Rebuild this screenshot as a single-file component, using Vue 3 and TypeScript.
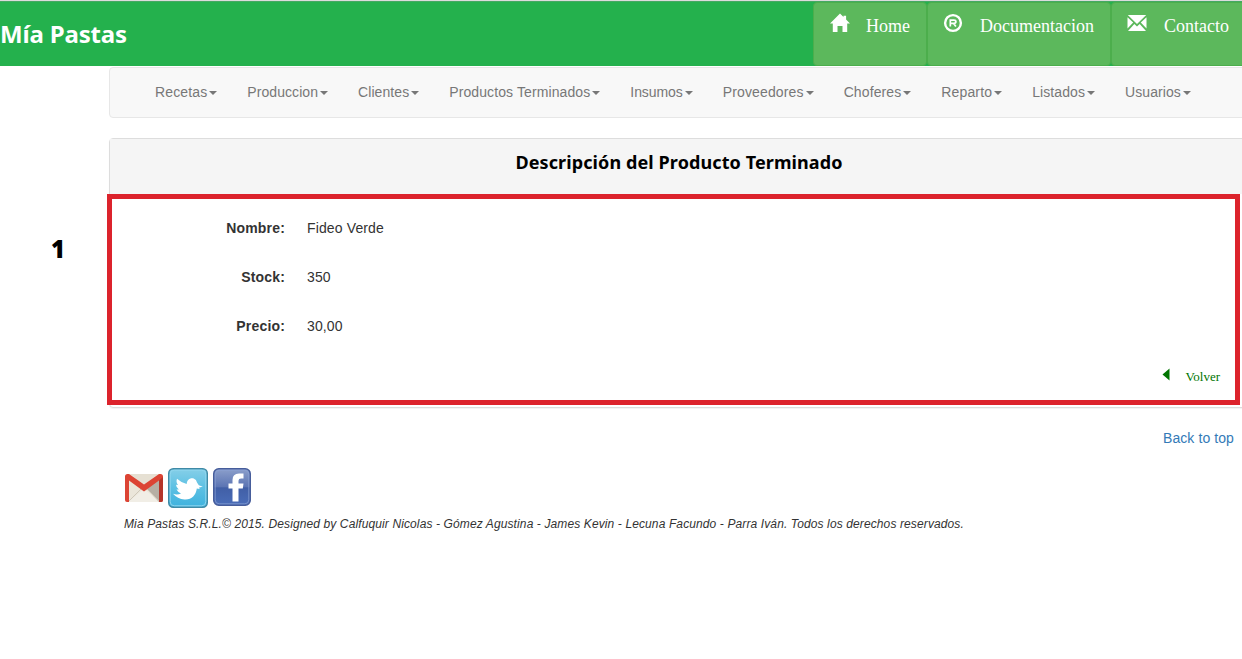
<script setup lang="ts">
interface Menu { text: string; tracking: number }
interface Field { label: string; value: string }

const menus: Menu[] = [
  { text: 'Recetas', tracking: 0.13 },
  { text: 'Produccion', tracking: 0.07 },
  { text: 'Clientes', tracking: 0.08 },
  { text: 'Productos Terminados', tracking: 0.1 },
  { text: 'Insumos', tracking: -0.07 },
  { text: 'Proveedores', tracking: 0.14 },
  { text: 'Choferes', tracking: 0.1 },
  { text: 'Reparto', tracking: 0.15 },
  { text: 'Listados', tracking: 0.1 },
  { text: 'Usuarios', tracking: 0.06 },
]
const fields: Field[] = [
  { label: 'Nombre:', value: 'Fideo Verde' },
  { label: 'Stock:', value: '350' },
  { label: 'Precio:', value: '30,00' },
]
</script>

<template>
  <div class="page">
    <header class="header">
      <div class="brand">Mía Pastas</div>
      <div class="actions">
        <a class="action home">
          <svg width="20" height="20" viewBox="0 0 20 20"><path fill="#fff" d="M10 .5 13.500 4V2.800h2.600v3.800L20 10.600h-2.800V19h-4.700v-6h-5v6H2.800v-8.400H0z" /></svg>
          <span>Home</span>
        </a>
        <a class="action docs">
          <svg width="20" height="20" viewBox="0 0 20 20"><circle cx="10" cy="10" r="7.900" fill="none" stroke="#fff" stroke-width="2.400" /><path d="M7.300 13.500V7.200h3.600q2 0 2 1.600t-2 1.600H7.300M10.600 10.400 12.900 13.500" fill="none" stroke="#fff" stroke-width="1.700" /></svg>
          <span>Documentacion</span>
        </a>
        <a class="action contact">
          <svg width="20" height="20" viewBox="0 0 20 20"><path fill="#fff" d="M.8 2h18.400L10 11zM.5 4.200 6.200 9.600.5 15.400zM19.500 4.200v11.200l-5.700-5.800zM7.300 10.900l2.700 2.500 2.700-2.500 6.300 7.100H1z" /></svg>
          <span>Contacto</span>
        </a>
      </div>
    </header>

    <div class="body">
      <aside class="marker">1</aside>
      <main class="content">
        <nav class="nav">
          <a v-for="m in menus" :key="m.text" class="menu" :style="{ letterSpacing: m.tracking + 'px' }">{{ m.text }}<i class="caret"></i></a>
        </nav>

        <section class="panel">
          <h3 class="title"><span>Descripción del Producto Terminado</span></h3>
          <div class="details">
            <dl class="fields">
              <div v-for="f in fields" :key="f.label" class="field">
                <dt>{{ f.label }}</dt>
                <dd>{{ f.value }}</dd>
              </div>
            </dl>
            <a class="back">
              <svg width="8" height="13" viewBox="0 0 8 13"><path fill="#007500" d="M7.500.5v12L.5 6.500z" /></svg>
              <span>Volver</span>
            </a>
          </div>
        </section>

        <div class="top-row"><a class="top">Back to top</a></div>

        <footer class="footer">
          <div class="social">
            <svg class="gmail" width="40" height="40" viewBox="0 0 40 40">
              <path fill="#ebe6da" d="M3 6h34v28H3z" />
              <path fill="#f1eee6" d="M4 34 20 21l16 13z" />
              <path fill="#e6e0d3" d="M6 6h28L20 17z" />
              <path fill="#a9a196" d="m23 21 12-10v23z" opacity=".8" />
              <path d="m5 33 12-12M35 33 23 21" stroke="#cfc8b9" fill="none" />
              <path fill="#dc4434" d="M1 8.500Q1 6 3.500 6H5l15 10.500L35 6h1.500Q39 6 39 8.500V32q0 2-2 2h-2V12.500L20 23.500 5 12.500V34H3q-2 0-2-2z" />
              <path fill="#b5352a" d="M35 12.500 39 9v23q0 2-2 2h-2z" />
            </svg>
            <svg class="twitter" width="40" height="40" viewBox="0 0 40 40">
              <defs><linearGradient id="tw" x2="0" y2="1"><stop stop-color="#86cfe8" /><stop offset=".5" stop-color="#5cc0e3" /><stop offset="1" stop-color="#3eb2de" /></linearGradient></defs>
              <rect x=".75" y=".75" width="38.500" height="38.500" rx="4.500" fill="url(#tw)" stroke="#3f8aa6" stroke-width="1.500" />
              <rect x="2.200" y="2.200" width="35.600" height="35.600" rx="4" fill="none" stroke="#8fd6ee" />
              <path fill="#fff" d="M9 10.800q3.500 3.400 9.700 5.200c.3-4.500 3.800-6.700 7-5.500q2.800 1 3.300 4l1.800 2.700 4 1.600-3.800.6.7 1.500-2.900-.3C28 27.500 23.500 32 16.500 31.500Q9.500 31 5 25.800q4.500 1.500 8-.4-3-.8-4.500-3.800l2.300-.2Q8.200 19.600 8 16.700l2 .4q-2.300-2.800-1-6.300z" />
            </svg>
            <svg class="facebook" width="38" height="38" viewBox="0 0 38 38">
              <defs><linearGradient id="fb" x2="0" y2="1"><stop stop-color="#8c9fcb" /><stop offset=".5" stop-color="#5b74b3" /><stop offset=".52" stop-color="#415fa6" /><stop offset="1" stop-color="#4a6db8" /></linearGradient></defs>
              <rect x=".75" y=".75" width="36.500" height="36.500" rx="5" fill="url(#fb)" stroke="#465d9b" stroke-width="1.500" />
              <rect x="2.200" y="2.200" width="33.600" height="33.600" rx="4" fill="none" stroke="#8ba3d4" opacity=".7" />
              <path fill="#fff" d="M19.500 33.500V20.500H15.500v-5h4V12Q19.500 5.500 26 5.500h4.500v5H28q-2.500 0-2.500 2.300v2.700h5l-.7 5h-4.300v13z" />
            </svg>
          </div>
          <p class="legal">Mia Pastas S.R.L.© 2015. Designed by Calfuquir Nicolas - Gómez Agustina - James Kevin - Lecuna Facundo - Parra Iván. Todos los derechos reservados.</p>
        </footer>
      </main>
    </div>
  </div>
</template>

<style>
body { margin: 0; background: #fff; overflow: hidden; }
</style>

<style scoped>
.page { box-sizing: border-box; width: 1242px; height: 659px; overflow: hidden; border-top: 1px solid #dcdcdc; font: 14px/20px "Liberation Sans", Arial, sans-serif; color: #333; }
.header { display: flex; justify-content: space-between; height: 64px; border-top: 1px solid #45a863; background: #24b14d; }
.brand { font: bold 24px/63px "Noto Sans", sans-serif; color: #fff; letter-spacing: -0.17px; white-space: nowrap; }
.actions { display: flex; width: 429px; }
.action { box-sizing: border-box; flex: none; display: flex; height: 64px; border: 1px solid #4cae4c; border-radius: 4px; background: #5cb85c; color: #fff; font: 18px/24px "Liberation Serif", serif; padding: 10px 0 0 16px; }
.action svg { flex: none; margin-right: 16px; }
.action span { padding-top: 1px; white-space: nowrap; }
.home { width: 114px; }
.docs { width: 184px; padding-left: 15px; }
.docs svg { margin-right: 17px; }
.contact { width: 140px; padding-left: 15px; }
.contact svg { margin-right: 17px; }
.body { display: flex; }
.marker { width: 109px; flex: none; box-sizing: border-box; padding: 170px 0 0 51px; font: 900 24px/26px "Open Sans", sans-serif; color: #000; }
.content { width: 1140px; flex: none; padding-top: 1px; }
.nav { box-sizing: border-box; display: flex; gap: 30px; height: 51px; padding: 14px 0 0 45px; border: 1px solid #e7e7e7; border-radius: 4px; background: #f8f8f8; }
.menu { display: flex; flex: none; color: #777; white-space: nowrap; }
.caret { width: 0; height: 0; margin: 9px 0 0 2px; border: 4px solid transparent; border-top-color: #777; border-bottom: 0; }
.panel { box-sizing: border-box; height: 270px; margin-top: 20px; border: 1px solid #ddd; border-radius: 4px; box-shadow: 0 1px 1px rgba(0, 0, 0, .05); }
.title { height: 55px; margin: 0; background: #f5f5f5; color: #000; font: bold 18px/47px "Noto Sans", sans-serif; letter-spacing: .1px; text-align: center; white-space: nowrap; }
.details { box-sizing: border-box; width: 1133px; height: 211px; margin-left: -3px; border: 5px solid #dc232c; padding: 19px 15px 0 0; background: #fff; }
.fields { margin: 0; display: grid; gap: 29px; }
.field { display: grid; grid-template-columns: 173px 1fr; column-gap: 22px; }
dt { font-weight: bold; text-align: right; letter-spacing: .17px; }
dd { margin: 0; letter-spacing: .13px; }
.back { display: flex; justify-content: flex-end; gap: 16px; margin-top: 32px; color: #007500; font: 13px/18px "Liberation Serif", serif; }
.top-row { display: flex; width: 1125px; justify-content: flex-end; margin-top: 20px; }
.top { color: #337ab7; letter-spacing: .09px; }
.footer { padding: 20px 0 0 15px; }
.social { display: flex; align-items: flex-start; height: 40px; }
.twitter { margin-left: 4px; }
.facebook { margin-left: 5px; }
.legal { margin: 8px 0 0; font: italic 12px/17px "Liberation Sans", Arial, sans-serif; letter-spacing: .115px; white-space: nowrap; }
</style>
